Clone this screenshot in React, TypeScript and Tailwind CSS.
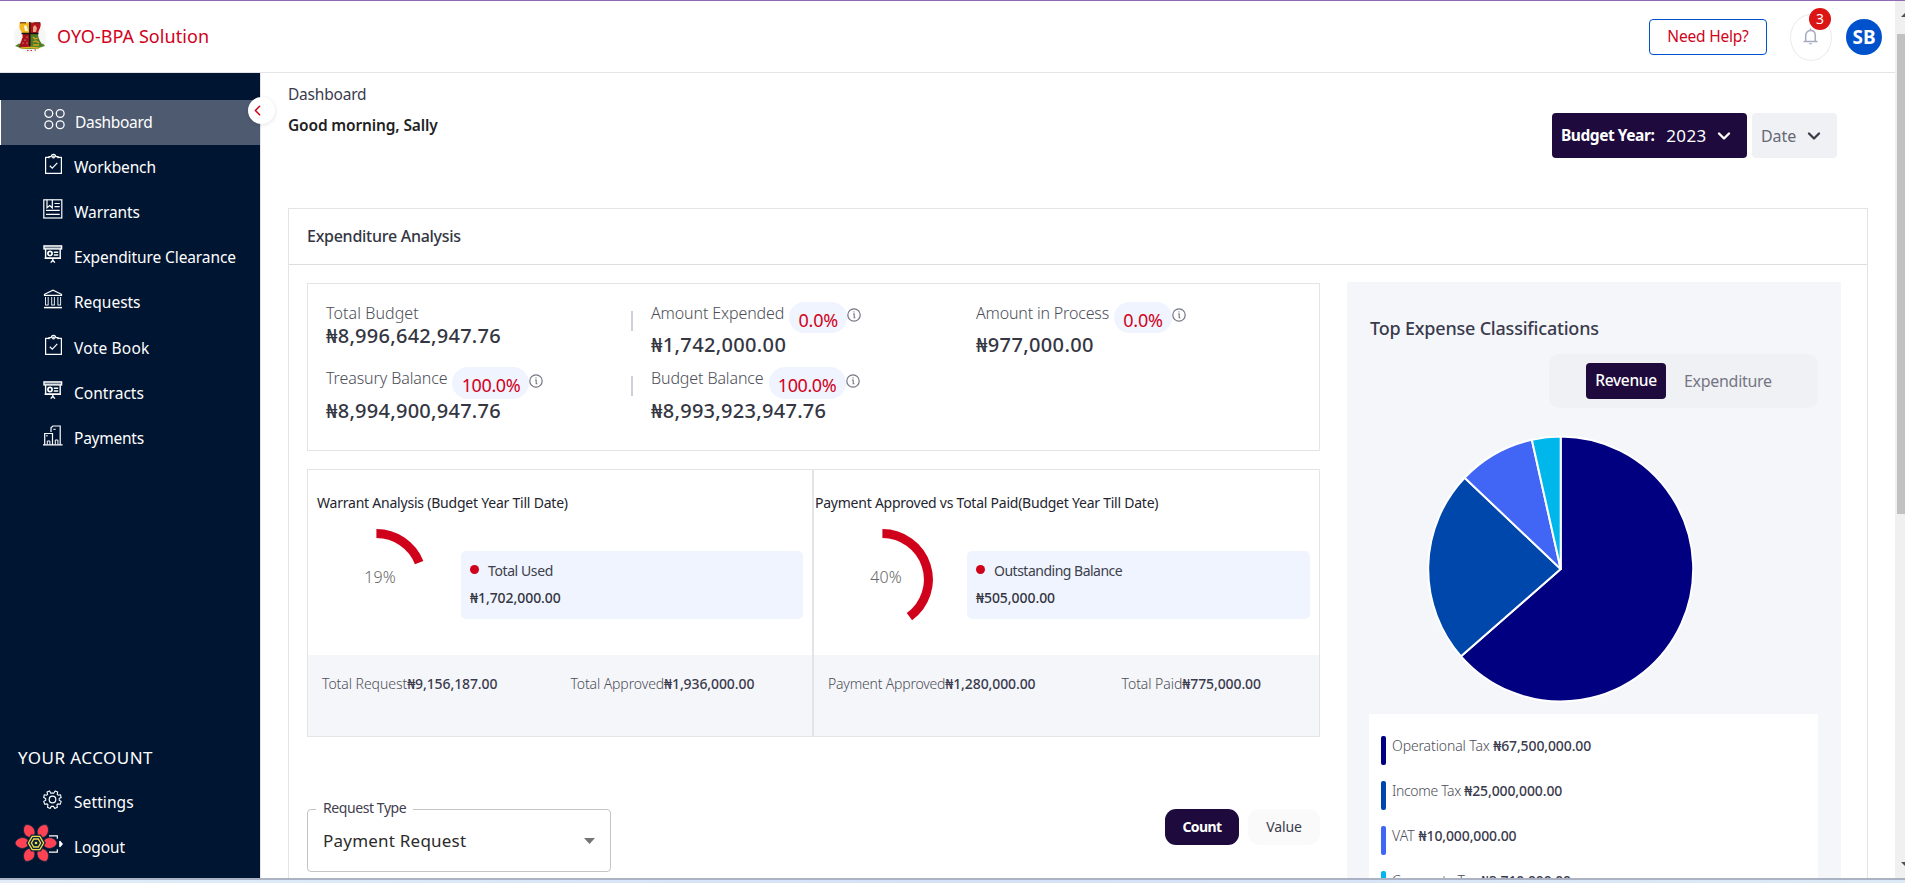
import type { ReactNode } from "react";
import { FiChevronDown, FiChevronLeft } from "react-icons/fi";

/* ---------- icons ---------- */

const line = {
  fill: "none",
  stroke: "currentColor",
  strokeWidth: 1.2,
} as const;

const GridIcon = () => (
  <svg width="22" height="22" viewBox="0 0 22 22" {...line} strokeWidth={1.3}>
    <circle cx="4.800" cy="5.500" r="3.900" />
    <circle cx="16.200" cy="5.500" r="3.900" />
    <circle cx="4.800" cy="16.700" r="3.900" />
    <circle cx="16.200" cy="16.700" r="3.900" />
  </svg>
);

const ClipboardIcon = () => (
  <svg width="20" height="22" viewBox="0 0 20 22" {...line}>
    <path d="M6.2 4.4H2.600v16h15.800v-16h-3.600" strokeLinejoin="round" />
    <path d="M6 5.200V3.600h2.200C8.400 2 9.300 1.300 10.500 1.300S12.600 2 12.800 3.600H15v1.600" />
    <circle cx="10.500" cy="3.900" r="0.900" />
    <path d="M6.800 12.700l2.500 2.400 5-5.300" />
  </svg>
);

const WarrantIcon = () => (
  <svg width="20" height="20" viewBox="0 0 20 20" {...line}>
    <rect x="0.800" y="0.800" width="18" height="18.200" />
    <path d="M4 .8v8l2.700-2.300L9.300 8.800v-8" />
    <path d="M11.500 4.500h5.200M11.500 7.600h5.200M3 11.300h13.700M3 15.300h13.700" />
  </svg>
);

const BoardIcon = () => (
  <svg width="20" height="19" viewBox="0 0 20 19" {...line} strokeWidth={1.4}>
    <rect x="1" y="0.900" width="17.600" height="3" fill="currentColor" fillOpacity="0.450" />
    <path d="M2.600 4v9h14.600V4M1.600 13.300h16.400M9.800 13.500v3.300M7.700 17.600l2.100-2.300 2.100 2.300" />
    <circle cx="7" cy="8.500" r="2.100" strokeWidth="1.700" />
    <path d="M10.800 7.200h4.400M10.800 9.900h4.400" strokeWidth="1.500" />
  </svg>
);

const BankIcon = () => (
  <svg width="20" height="20" viewBox="0 0 20 20" {...line}>
    <path d="M1.500 6.300v-1L10 1.200l8.500 4.100v1z" />
    <path d="M1 18.600h18" strokeWidth="1.500" />
    <path d="M2.500 8v8.300M5.200 8v8.300M8.700 8v8.300M11.400 8v8.300M14.900 8v8.300M17.600 8v8.300M2.500 16h2.700M8.700 16h2.700M14.900 16h2.700" strokeWidth="0.900" />
  </svg>
);

const BuildingIcon = () => (
  <svg width="20" height="21" viewBox="0 0 20 21" {...line}>
    <path d="M0 19.800h19.600M1.700 19.600V8.500h7.800v11M8 7V2.700L9.800 1h7.400v18.600" />
    <path d="M4.300 19.500v-3.500h2.600v3.500M12.300 19.500v-4.500h2.600v4.500M10.300 4.300h2.400M3 10.800h1.800" strokeWidth="1" />
  </svg>
);

const GearIcon = () => (
  <svg width="19" height="19" viewBox="0 0 19 19" {...line}>
    <circle cx="9.500" cy="9.500" r="3.300" />
    <path
      d="M7.600 3.100 6.700.900 4 2l.6 2.300-.9.900L1.300 4.700.7 7.600l2 1v1.600l-2 1.200 1 2.800 2.400-.3.900 1L4.500 17.200l2.600 1.200 1.300-2h2l1.400 2 2.600-1.200-.5-2.300.9-1 2.400.3 1-2.800-2-1.200V8.600l2-1-.8-2.900-2.300.5-.9-.900.5-2.300-2.600-1.100-1.200 2.200z"
      strokeLinejoin="round"
      strokeWidth="1.100"
    />
  </svg>
);

const LogoutIcon = () => (
  <svg width="20" height="20" viewBox="0 0 20 20" {...line}>
    <path d="M6 1.800h8.300v3M6 18.200h8.300v-3M16.800 7.200 19 10l-2.200 2.800" />
    <path d="M16.800 8v4L19 10z" fill="currentColor" />
  </svg>
);

const FlowerIcon = () => (
  <svg width="44" height="42" viewBox="-22 -21 44 42">
    {[0, 60, 120, 180, 240, 300].map((a) => (
      <path
        key={a}
        d="M6 .5C8-4.500 12.500-6.800 17-4.600 19-3.600 20.500-2 21 0 20.500 2 19 3.600 17 4.600 12.500 6.800 8 4.500 6 .5z"
        transform={`rotate(${a})`}
        fill="#ff4154"
        stroke="#06283c"
        strokeWidth="0.800"
      />
    ))}
    <path d="M-8 0l4-7h8L8 0 4 7h-8z" fill="#0a2238" stroke="#0a2238" strokeWidth="3.200" />
    <path d="M-7.600 0l3.800-6.600h7.600L7.600 0 3.800 6.600h-7.600z" fill="none" stroke="#efdb50" strokeWidth="1.300" />
    <path d="M-4.600 0l2.300-4h4.600L4.600 0 2.300 4h-4.600z" fill="none" stroke="#efdb50" strokeWidth="1.300" />
    <circle r="1.300" fill="#efdb50" />
  </svg>
);

const CrestIcon = () => (
  <svg width="34" height="34" viewBox="0 0 34 34">
    <circle cx="17" cy="17" r="16" fill="#f6f6f6" />
    <path d="M2 26l4-2.500 2 1 3-1.500h14l3 1.500 2-1 2 2.500-5 1.500-3 1.500H9l-3-1.500z" fill="#4c8a2c" />
    <path d="M6.500 2.500H17V14H9.500c-.5-3-3.500-4-3-8z" fill="#f0b81c" />
    <path d="M17 2.500h10.500c1 5-2 7-2.500 11.500h-8z" fill="#b5121b" />
    <path d="M9.500 13.500H17V27H6c1.500-5 4-8 3.500-13.500z" fill="#a8101c" />
    <path d="M17 13.500h8c0 5 2.500 8 5 12.500H17z" fill="#4f7a28" />
    <path d="M16.800 2v24.500M8.500 13.500h17" stroke="#161616" strokeWidth="1.400" />
    <path d="M11 6l2-1 1 2 1 4h-3z" fill="#fff7e0" />
    <path d="M20 7l2-2 2 3-1 4h-3z" fill="#e5a98a" />
    <path d="M7 2.800h6M21 2.800h6" stroke="#5c1a10" strokeWidth="1" />
    <path d="M9.500 17h.010M12 20h.010M10 23h.010M14 17h.010M14 23h.010" stroke="#f0d9a0" strokeWidth="1.200" strokeLinecap="round" />
    <path d="M20 17l2 2 3-1M20 22l3-1 3 2M20 25h6" stroke="#d9a21b" strokeWidth="1.300" fill="none" />
    <path d="M8 28.300c5-1 13-1 18 0" stroke="#e6b422" strokeWidth="1.500" fill="none" />
    <path d="M14 30.500h1.500M17.500 30.500H19M21.500 30h1.500" stroke="#c23" strokeWidth="1" />
  </svg>
);

const BellIcon = () => (
  <svg width="15" height="18" viewBox="0 0 15 18" fill="none" stroke="#a6aac0" strokeWidth="1.500">
    <path d="M2.700 13.300V7.500C2.700 4.500 4.700 2.600 7.500 2.600s4.800 1.900 4.800 4.900v5.800" />
    <path d="M.5 13.600h14M7.500.5v2" />
    <path d="M5.800 15.200c.2 1.600 3.200 1.600 3.400 0z" fill="#a6aac0" stroke="none" />
  </svg>
);

const InfoIcon = () => (
  <svg width="14" height="14" viewBox="0 0 14 14" fill="none" stroke="#757684" strokeWidth="1.200" className="shrink-0">
    <circle cx="7" cy="7" r="6.200" />
    <path d="M6 6h1.200v4.200M7.200 9.800h1.200M6.500 3.900h1" strokeWidth="1.100" />
  </svg>
);

/* ---------- sidebar ---------- */

type Item = { label: string; icon: ReactNode; tracking: string; active?: boolean };

const navItems: Item[] = [
  { label: "Dashboard", icon: <GridIcon />, tracking: "tracking-[-0.3px]", active: true },
  { label: "Workbench", icon: <ClipboardIcon />, tracking: "tracking-[-0.13px]" },
  { label: "Warrants", icon: <WarrantIcon />, tracking: "tracking-[-0.08px]" },
  { label: "Expenditure Clearance", icon: <BoardIcon />, tracking: "tracking-[-0.1px]" },
  { label: "Requests", icon: <BankIcon />, tracking: "tracking-[-0.02px]" },
  { label: "Vote Book", icon: <ClipboardIcon />, tracking: "tracking-[0.17px]" },
  { label: "Contracts", icon: <BoardIcon />, tracking: "tracking-[0.04px]" },
  { label: "Payments", icon: <BuildingIcon />, tracking: "tracking-[-0.24px]" },
];

const accountItems: Item[] = [
  { label: "Settings", icon: <GearIcon />, tracking: "tracking-[0.1px]" },
  { label: "Logout", icon: <LogoutIcon />, tracking: "tracking-[-0.1px]" },
];

function NavItem({ label, icon, tracking, active }: Item) {
  return (
    <div
      className={`flex h-[45px] items-center text-[15.5px] text-white ${
        active ? "border-l border-white bg-[#4d5a70] pl-[42px]" : "pl-[42px]"
      }`}
    >
      <span className={`flex justify-center pb-[7px] ${active ? "w-[23px]" : "w-[21px]"}`}>{icon}</span>
      <span className={`${active ? "ml-[9px]" : "ml-[11px]"} whitespace-nowrap ${tracking}`}>{label}</span>
    </div>
  );
}

function Sidebar() {
  return (
    <aside className="relative flex w-[261px] shrink-0 flex-col border-r border-[#e4e4e8] bg-[#001532] pt-[27px]">
      <nav>
        {navItems.slice(0, 5).map((item) => (
          <NavItem key={item.label} {...item} />
        ))}
        <div className="pt-px">
          {navItems.slice(5).map((item) => (
            <NavItem key={item.label} {...item} />
          ))}
        </div>
      </nav>
      <div className="mt-[284px] h-[35px] pl-[18px] text-[17px] leading-[26px] tracking-[0.47px] text-white">
        YOUR ACCOUNT
      </div>
      <div>
        {accountItems.map((item) => (
          <NavItem key={item.label} {...item} />
        ))}
      </div>
      <button className="absolute top-[24px] left-[248px] z-10 flex h-[27px] w-[27px] items-center rounded-full bg-white text-[#d0021b] shadow-[0_1px_4px_rgba(0,0,0,0.12)]">
        <FiChevronLeft size={17} strokeWidth={2.2} className="ml-px" />
      </button>
      <div className="absolute bottom-[14px] left-[14px]">
        <FlowerIcon />
      </div>
    </aside>
  );
}

/* ---------- header ---------- */

function Header() {
  return (
    <header className="flex h-[72px] shrink-0 items-center border-b border-[#e3e4e8] pr-[13px] pl-[13px]">
      <CrestIcon />
      <span className="ml-[10px] pb-px text-lg tracking-[0.06px] text-[#d0021b]">OYO-BPA Solution</span>
      <button className="mt-px ml-auto h-[36px] w-[118px] rounded-[4px] border border-[#0052cc] text-[15.5px] tracking-[-0.2px] text-[#d0021b]">
        Need Help?
      </button>
      <div className="relative mt-px ml-[23px] flex h-[47px] w-[42px] items-center justify-center rounded-[50%] border border-[#ebebeb] pr-px">
        <BellIcon />
        <span className="absolute -top-[7px] left-[18px] flex h-[22px] w-[22px] items-center justify-center rounded-full bg-[#db1414] text-sm leading-none text-white">
          3
        </span>
      </div>
      <div className="mt-px ml-[14px] flex h-[36px] w-[36px] items-center justify-center rounded-full bg-[#0052cc] text-[19px] font-bold text-white">
        SB
      </div>
    </header>
  );
}

/* ---------- summary ---------- */

type Stat = {
  label: string;
  amount: string;
  tracking: string;
  amountTracking: string;
  percent?: string;
  separator?: boolean;
  tall?: boolean;
};

const stats: Stat[] = [
  { label: "Total Budget", amount: "₦8,996,642,947.76", tracking: "tracking-[0.08px]", amountTracking: "tracking-[0.26px]", separator: true },
  { label: "Amount Expended", amount: "₦1,742,000.00", tracking: "tracking-[-0.12px]", amountTracking: "tracking-[0.34px]", percent: "0.0%" },
  { label: "Amount in Process", amount: "₦977,000.00", tracking: "tracking-[-0.17px]", amountTracking: "tracking-[0.36px]", percent: "0.0%" },
  { label: "Treasury Balance", amount: "₦8,994,900,947.76", tracking: "tracking-[-0.1px]", amountTracking: "tracking-[0.26px]", percent: "100.0%", separator: true, tall: true },
  { label: "Budget Balance", amount: "₦8,993,923,947.76", tracking: "tracking-[-0.12px]", amountTracking: "tracking-[0.28px]", percent: "100.0%", tall: true },
];

function StatCell({ label, amount, tracking, amountTracking, percent, separator, tall }: Stat) {
  return (
    <div className="flex h-[65px] justify-between whitespace-nowrap">
      <div>
        <div className="flex items-start">
          <span className={`text-base leading-[23px] font-light text-[#4c4e58] ${tracking}`}>{label}</span>
          {percent && (
            <>
              <span
                className={`ml-[5px] flex items-center justify-center rounded-full bg-[#f0f4ff] pt-[4px] text-lg leading-none text-[#d0021b] ${
                  tall ? "h-[32px] w-[77px] tracking-[-0.4px]" : "h-[31px] w-[58px] tracking-[-0.2px]"
                }`}
              >
                {percent}
              </span>
              <span className={tall ? "mt-[7px]" : "mt-[6px]"}>
                <InfoIcon />
              </span>
            </>
          )}
        </div>
        <div
          className={`text-xl leading-[24px] font-medium text-[#343642] ${percent ? "" : "-mt-px"} ${amountTracking}`}
        >
          {amount}
        </div>
      </div>
      {separator && <div className="mt-[9px] mr-[18px] h-[20px] w-[2px] bg-[#cfcedb]" />}
    </div>
  );
}

/* ---------- gauges ---------- */

function Gauge({ percent }: { percent: number }) {
  const cx = 68.4;
  const cy = 64.5;
  const r = 46;
  const a = (percent / 100) * 2 * Math.PI;
  const x = cx + r * Math.sin(a);
  const y = cy - r * Math.cos(a);
  return (
    <svg width="153" height="140" viewBox="0 0 153 140" className="shrink-0">
      <path d={`M${cx} ${cy - r}A${r} ${r} 0 0 1 ${x} ${y}`} fill="none" stroke="#d0021b" strokeWidth="9" />
      <text x="72" y="68" textAnchor="middle" className="fill-[#666] text-base font-light">
        {percent}%
      </text>
    </svg>
  );
}

type Figure = { label: string; value: string; tracking: string };

function GaugeCard(props: {
  title: string;
  titleClass: string;
  percent: number;
  box: Figure;
  footer: Figure[];
  footerGap: string;
  width: string;
}) {
  const { title, titleClass, percent, box, footer, footerGap, width } = props;
  return (
    <div className={`flex h-[268px] flex-col border border-[#e3e3e8] pt-[21px] whitespace-nowrap ${width}`}>
      <div className={`text-sm leading-[24px] text-[#23252f] ${titleClass}`}>{title}</div>
      <div className="flex h-[140px]">
        <Gauge percent={percent} />
        <div className="mt-[36px] mr-[9px] h-[68px] flex-1 rounded-[5px] bg-[#f0f4ff] pt-[10px] pl-[9px]">
          <div className="flex items-center gap-[9px] leading-[20px]">
            <span className="mb-[3px] h-[9px] w-[9px] rounded-full bg-[#d0021b]" />
            <span className={`text-sm leading-[20px] text-[#3d3f4b] ${box.tracking}`}>{box.label}</span>
          </div>
          <div className="mt-[7px] text-sm leading-[20px] font-medium tracking-[-0.06px] text-[#343642]">{box.value}</div>
        </div>
      </div>
      <div className={`flex flex-1 bg-[#f5f6fa] pt-[19px] pl-[14px] text-sm leading-[20px] ${footerGap}`}>
        {footer.map((f) => (
          <div key={f.label}>
            <span className={`font-light text-[#4c4e58] ${f.tracking}`}>{f.label}</span>
            <span className="font-medium tracking-[-0.1px] text-[#3a3b4d]">{f.value}</span>
          </div>
        ))}
      </div>
    </div>
  );
}

/* ---------- expense classifications ---------- */

const slices = [
  { label: "Operational Tax", value: 67500000, color: "#000080", tracking: "tracking-[-0.12px]" },
  { label: "Income Tax", value: 25000000, color: "#0047ab", tracking: "tracking-[-0.34px]" },
  { label: "VAT", value: 10000000, color: "#4166f5", tracking: "tracking-[0.1px]" },
  { label: "Corporate Tax", value: 3710000, color: "#00b7eb", tracking: "tracking-[-0.25px]" },
];

const naira = (n: number) => `₦${n.toLocaleString("en-US", { minimumFractionDigits: 2 })}`;

function Pie() {
  const cx = 191.7;
  const cy = 161;
  const r = 132.5;
  const total = slices.reduce((sum, s) => sum + s.value, 0);
  let start = 0;
  return (
    <svg width="449" height="306" viewBox="0 0 449 306">
      {slices.map((s) => {
        const end = start + (s.value / total) * 2 * Math.PI;
        const large = end - start > Math.PI ? 1 : 0;
        const d = `M${cx} ${cy}L${cx + r * Math.sin(start)} ${cy - r * Math.cos(start)}A${r} ${r} 0 ${large} 1 ${
          cx + r * Math.sin(end)
        } ${cy - r * Math.cos(end)}Z`;
        start = end;
        return <path key={s.label} d={d} fill={s.color} stroke="#fff" strokeWidth="2" strokeLinejoin="round" />;
      })}
    </svg>
  );
}

function Classifications() {
  return (
    <section className="mt-[17px] ml-[27px] h-[640px] w-[494px] shrink-0 bg-[#f5f6fa] pr-[23px] pl-[22px]">
      <h2 className="pt-[33px] pl-px text-lg leading-[26px] font-medium tracking-[-0.2px] text-[#3a3b4d]">
        Top Expense Classifications
      </h2>
      <div className="mt-[13px] ml-auto flex h-[54px] w-[269px] items-center rounded-[10px] bg-[#f0f1f5] pl-[37px]">
        <button className="h-[36px] w-[80px] rounded-[4px] bg-[#1e0a3c] text-[15.5px] font-medium tracking-[-0.3px] text-white">
          Revenue
        </button>
        <button className="ml-[18px] pb-px text-base tracking-[-0.3px] text-[#757684]">Expenditure</button>
      </div>
      <Pie />
      <ul className="flex h-[220px] flex-col gap-4 bg-white pt-[22px] pl-[12px] text-sm">
        {slices.map((s) => (
          <li key={s.label} className="flex h-[29px] gap-[6px]">
            <span className="h-[29px] w-[5px] rounded-[2px]" style={{ backgroundColor: s.color }} />
            <span className="leading-[20px] whitespace-nowrap">
              <span className={`font-light text-[#4c4e58] ${s.tracking}`}>{s.label} </span>
              <span className="font-medium tracking-[-0.12px] text-[#3a3b4d]">{naira(s.value)}</span>
            </span>
          </li>
        ))}
      </ul>
    </section>
  );
}

/* ---------- main ---------- */

function Overview() {
  return (
    <div className="mt-[18px] ml-[18px] w-[1013px] shrink-0">
      <div className="grid h-[168px] grid-cols-[325px_325px_325px] content-start border border-[#e3e3e8] pt-[18px] pl-[18px]">
        {stats.map((s) => (
          <StatCell key={s.label} {...s} />
        ))}
      </div>
      <div className="mt-[18px] flex">
        <GaugeCard
          title="Warrant Analysis (Budget Year Till Date)"
          titleClass="pl-[9px] tracking-[-0.22px]"
          width="w-[506px]"
          percent={19}
          box={{ label: "Total Used", value: "₦1,702,000.00", tracking: "tracking-[-0.4px]" }}
          footer={[
            { label: "Total Request", value: "₦9,156,187.00", tracking: "tracking-[-0.05px]" },
            { label: "Total Approved", value: "₦1,936,000.00", tracking: "tracking-[-0.1px]" },
          ]}
          footerGap="gap-[73px]"
        />
        <GaugeCard
          title="Payment Approved vs Total Paid(Budget Year Till Date)"
          titleClass="pl-px tracking-[-0.24px]"
          width="w-[507px]"
          percent={40}
          box={{ label: "Outstanding Balance", value: "₦505,000.00", tracking: "tracking-[-0.5px]" }}
          footer={[
            { label: "Payment Approved", value: "₦1,280,000.00", tracking: "tracking-[-0.2px]" },
            { label: "Total Paid", value: "₦775,000.00", tracking: "tracking-[-0.05px]" },
          ]}
          footerGap="gap-[86px]"
        />
      </div>
      <div className="mt-[72px] flex items-start">
        <div className="relative flex h-[63px] w-[304px] items-center rounded-[4px] border border-[#c4c4c4] pr-[15px] pl-[15px]">
          <span className="absolute -top-[13px] left-[8px] bg-white px-[7px] text-sm leading-[22px] tracking-[-0.42px] text-[#3f4050]">
            Request Type
          </span>
          <span className="text-[17px] tracking-[0.22px] text-[#2b2b2b]">Payment Request</span>
          <svg width="11" height="6" viewBox="0 0 11 6" className="ml-auto">
            <path d="M0 0h11L5.500 6z" fill="#757575" />
          </svg>
        </div>
        <button className="ml-auto h-[36px] w-[74px] rounded-[11px] bg-[#1e0a3c] pb-px text-sm font-bold tracking-[-0.6px] text-white">
          Count
        </button>
        <button className="ml-[9px] h-[36px] w-[72px] rounded-[11px] bg-[#fafafa] pb-px text-sm tracking-[-0.1px] text-[#3a3b4d]">
          Value
        </button>
      </div>
    </div>
  );
}

function Main() {
  return (
    <main className="flex min-w-0 flex-1 flex-col pl-[27px]">
      <div className="flex h-[135px] shrink-0 justify-between pr-[58px]">
        <div className="pt-[9px] text-[15.5px] leading-[24px]">
          <div className="tracking-[-0.2px] text-[#3a3b4d]">Dashboard</div>
          <div className="mt-[7px] font-semibold tracking-[-0.15px] text-[#1f1f24]">Good morning, Sally</div>
        </div>
        <div className="flex gap-[5px] pt-[40px]">
          <button className="flex h-[45px] w-[195px] items-center rounded-[4px] bg-[#1e0a3c] pl-[9px] text-white">
            <span className="text-[15.5px] font-bold tracking-[-0.45px]">Budget Year:</span>
            <span className="ml-[12px] text-[17px] tracking-[0.3px]">2023</span>
            <FiChevronDown size={20} strokeWidth={2.8} className="ml-[8px]" />
          </button>
          <button className="flex h-[45px] w-[85px] items-center rounded-[4px] bg-[#f0f1f5] pl-[9px] text-[#3a3b47]">
            <span className="text-base tracking-[-0.1px] text-[#666873]">Date</span>
            <FiChevronDown size={20} strokeWidth={2.8} className="ml-[8px]" />
          </button>
        </div>
      </div>
      <section className="min-h-0 w-[1580px] flex-1 border-x border-t border-[#e3e3e8]">
        <h1 className="flex h-[56px] items-center border-b border-[#dedee2] pb-px pl-[18px] text-base font-medium tracking-[-0.27px] text-[#343642]">
          Expenditure Analysis
        </h1>
        <div className="flex">
          <Overview />
          <Classifications />
        </div>
      </section>
    </main>
  );
}

function Scrollbar() {
  return (
    <div className="flex w-[10px] shrink-0 flex-col overflow-hidden bg-[#f0f0f0] pl-[2px]">
      <div className="flex h-[33px] items-start justify-end pt-[12px]">
        <svg width="4" height="4" viewBox="0 0 4 4">
          <path d="M0 4l4-4v4z" fill="#505050" />
        </svg>
      </div>
      <div className="h-[480px] bg-[#c1c1c1]" />
      <div className="mt-auto flex h-[16px] justify-end">
        <svg width="4" height="4" viewBox="0 0 4 4">
          <path d="M0 0h4v4z" fill="#505050" />
        </svg>
      </div>
    </div>
  );
}

export default function App() {
  return (
    <div className="flex h-[883px] w-[1905px] flex-col overflow-hidden bg-white font-['Noto_Sans',sans-serif]">
      <div className="h-px shrink-0 bg-[#9168b5]" />
      <div className="flex h-[877px] shrink-0 overflow-hidden">
        <div className="flex min-w-0 flex-1 flex-col">
          <Header />
          <div className="flex min-h-0 flex-1 overflow-hidden">
            <Sidebar />
            <Main />
          </div>
        </div>
        <Scrollbar />
      </div>
      <div className="h-[5px] shrink-0 border-t-2 border-[#abb2c3] bg-linear-to-r from-[#e2edf9] via-[#d5e1f6] to-[#dceaf6]" />
    </div>
  );
}
